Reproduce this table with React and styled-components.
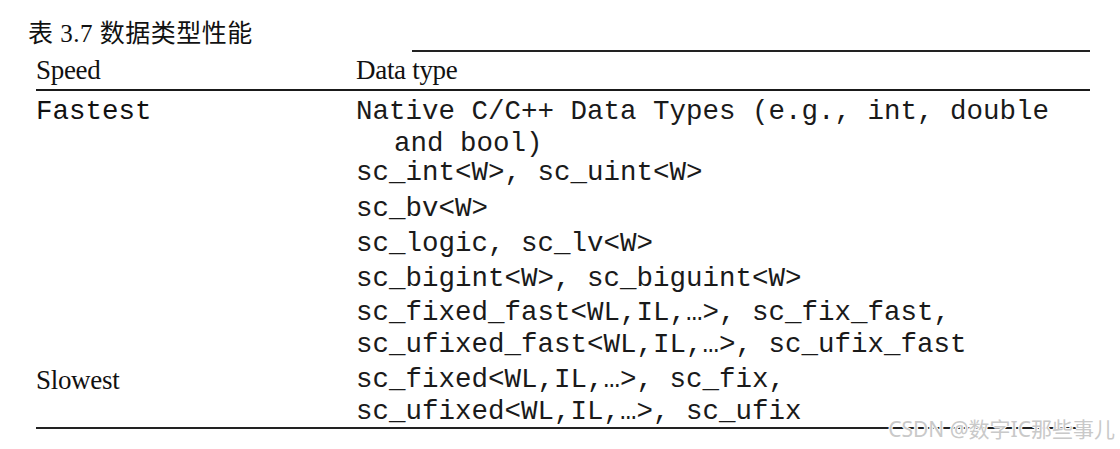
import React from 'react';
import styled, { createGlobalStyle } from 'styled-components';

const GlobalStyle = createGlobalStyle`
  html, body {
    margin: 0;
    padding: 0;
    background: #ffffff;
  }
  body {
    width: 1120px;
    height: 449px;
    overflow: hidden;
    color: #111;
  }
`;

const rows = [
  {
    speed: 'Fastest',
    mono: true,
    lines: ['Native C/C++ Data Types (e.g., int, double', 'and bool)'],
    after: -3,
  },
  { lines: ['sc_int<W>, sc_uint<W>'], after: 4 },
  { lines: ['sc_bv<W>'], after: 3 },
  { lines: ['sc_logic, sc_lv<W>'], after: 3 },
  { lines: ['sc_bigint<W>, sc_biguint<W>'], after: 2 },
  {
    lines: ['sc_fixed_fast<WL,IL,…>, sc_fix_fast,', 'sc_ufixed_fast<WL,IL,…>, sc_ufix_fast'],
    after: 3,
  },
  {
    speed: 'Slowest',
    lines: ['sc_fixed<WL,IL,…>, sc_fix,', 'sc_ufixed<WL,IL,…>, sc_ufix'],
    after: 0,
  },
];

const App = () => {
  return (
    <>
      <GlobalStyle />
      <Page>
        <Caption>表 3.7 数据类型性能</Caption>
        <Table>
          <TopRule />
          <HeaderRow>
            <HeadCell>Speed</HeadCell>
            <HeadCell>Data type</HeadCell>
          </HeaderRow>
          <ThickRule />
          <Body>
            {rows.map((row, i) => (
              <Row key={i} $after={row.after}>
                <SpeedCell $mono={row.mono}>{row.speed}</SpeedCell>
                <TypeCell>
                  {row.lines.map((line, j) => (
                    <Line key={j} $indent={i === 0 && j > 0}>
                      {line}
                    </Line>
                  ))}
                </TypeCell>
              </Row>
            ))}
          </Body>
          <BottomRule />
        </Table>
        <Watermark>CSDN @数字IC那些事儿</Watermark>
      </Page>
    </>
  );
};

export default App;

const Page = styled.div`
  position: relative;
  width: 1120px;
  height: 449px;
  padding-left: 28px;
  box-sizing: border-box;
`;

const Caption = styled.div`
  padding-top: 20px;
  font-family: 'Liberation Serif', 'Noto Sans CJK SC', serif;
  font-size: 25px;
  line-height: 28px;
  height: 28px;
  letter-spacing: 0.5px;
  color: #111;
`;

const Table = styled.div`
  margin-left: 8px;
  width: 1054px;
  display: flex;
  flex-direction: column;
`;

const TopRule = styled.div`
  margin-top: 2px;
  margin-left: 376px;
  height: 1.5px;
  background: #222;
`;

const HeaderRow = styled.div`
  display: grid;
  grid-template-columns: 320px 1fr;
  height: 36px;
`;

const HeadCell = styled.div`
  font-family: 'Liberation Serif', serif;
  font-size: 27px;
  letter-spacing: -0.3px;
  line-height: 36px;
  color: #111;
`;

const ThickRule = styled.div`
  margin-top: 1px;
  height: 2.5px;
  background: #1a1a1a;
`;

const Body = styled.div`
  padding-top: 5px;
  display: flex;
  flex-direction: column;
`;

const Row = styled.div`
  display: grid;
  grid-template-columns: 320px 1fr;
  margin-bottom: ${(p) => p.$after}px;
`;

const SpeedCell = styled.div`
  font-family: ${(p) => (p.$mono ? "'Liberation Mono', monospace" : "'Liberation Serif', serif")};
  font-size: ${(p) => (p.$mono ? '27.5px' : '27px')};
  letter-spacing: ${(p) => (p.$mono ? '0' : '-0.3px')};
  line-height: 32px;
  color: #111;
`;

const TypeCell = styled.div`
  display: flex;
  flex-direction: column;
`;

const Line = styled.div`
  font-family: 'Liberation Mono', monospace;
  font-size: 27.5px;
  line-height: 32px;
  white-space: pre;
  padding-left: ${(p) => (p.$indent ? '38px' : '0')};
  color: #1a1a1a;
`;

const BottomRule = styled.div`
  margin-top: -1px;
  height: 1.5px;
  background: #222;
`;

const Watermark = styled.div`
  position: absolute;
  right: 5px;
  top: 415px;
  font-family: 'Noto Sans', 'Noto Sans CJK SC', sans-serif;
  font-size: 21px;
  line-height: 28px;
  color: #c9c9c9;
  text-shadow: 1px 0 0 #fff, -1px 0 0 #fff, 0 1px 0 #fff, 0 -1px 0 #fff;
`;
